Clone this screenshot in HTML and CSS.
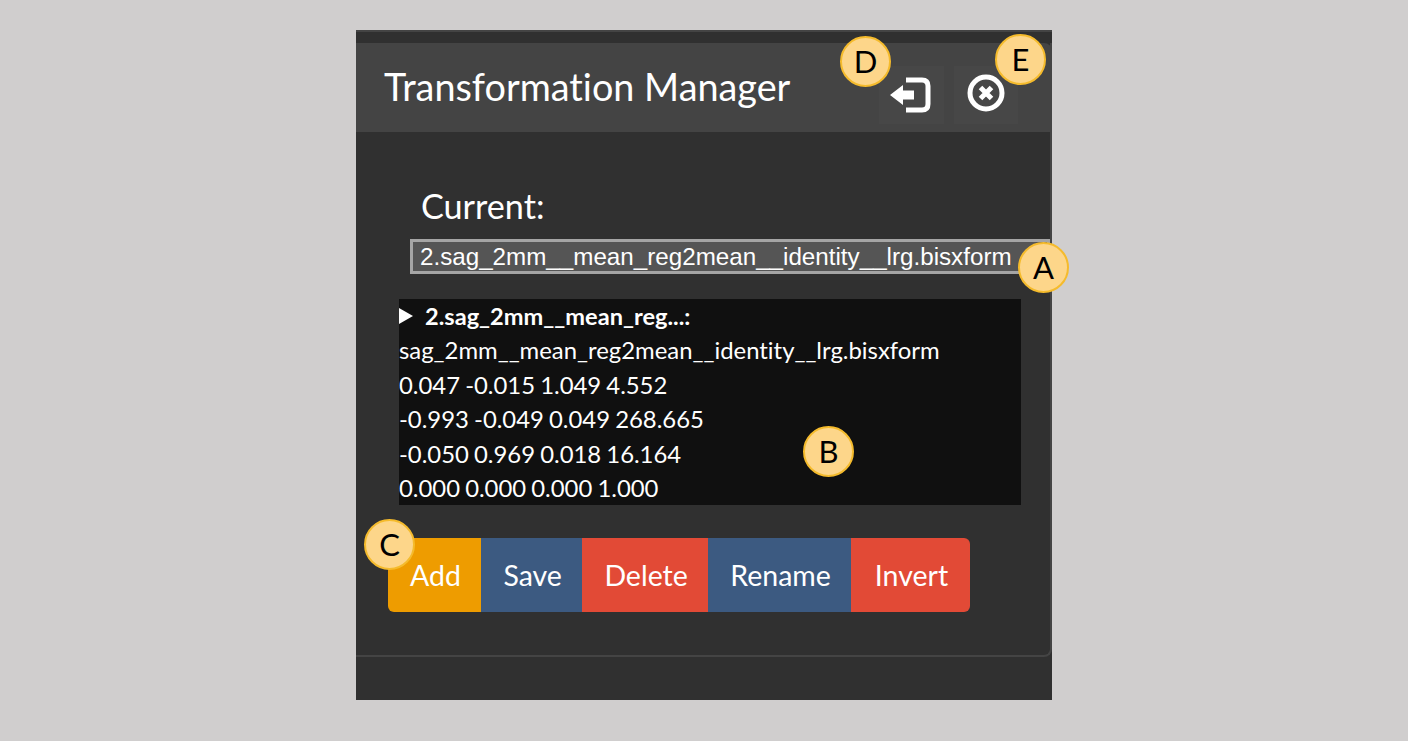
FILE: index.html
```html
<!DOCTYPE html>
<html>
<head>
<meta charset="utf-8">
<title>Transformation Manager</title>
<link rel="stylesheet" href="styles.css">
</head>
<body>
<div class="panel">
	<div class="dialog">
		<div class="header">
			<h1 class="title">Transformation Manager</h1>
			<div class="iconbtn exitbtn">
				<svg width="42" height="36" viewBox="0 0 42 36">
					<path d="M0 18 L13 8 V13.5 H24 V22.5 H13 V28 Z" fill="#fff"/>
					<path d="M16 3 H32 Q38 3 38 9 V27 Q38 33 32 33 H16" fill="none" stroke="#fff" stroke-width="5"/>
				</svg>
			</div>
			<div class="iconbtn closebtn">
				<svg width="40" height="40" viewBox="0 0 40 40">
					<circle cx="20" cy="20" r="16" fill="none" stroke="#fff" stroke-width="5"/>
					<path d="M14.5 14.5 L25.5 25.5 M25.5 14.5 L14.5 25.5" fill="none" stroke="#fff" stroke-width="5"/>
				</svg>
			</div>
		</div>
		<div class="content">
			<div class="label">Current:</div>
			<div class="current">2.sag_2mm__mean_reg2mean__identity__lrg.bisxform</div>
			<div class="info">
				<div class="infohead"><span class="arrow"></span><b>2.sag_2mm__mean_reg...:</b></div>
				<div>sag_2mm__mean_reg2mean__identity__lrg.bisxform</div>
				<div>0.047 -0.015 1.049 4.552</div>
				<div>-0.993 -0.049 0.049 268.665</div>
				<div>-0.050 0.969 0.018 16.164</div>
				<div>0.000 0.000 0.000 1.000</div>
			</div>
			<div class="buttons">
				<a class="btn orange">Add</a>
				<a class="btn blue">Save</a>
				<a class="btn red">Delete</a>
				<a class="btn blue">Rename</a>
				<a class="btn red">Invert</a>
			</div>
		</div>
	</div>

	<!-- callout letters -->
	<div class="badge badge-a">A</div>
	<div class="badge badge-b">B</div>
	<div class="badge badge-c">C</div>
	<div class="badge badge-d">D</div>
	<div class="badge badge-e">E</div>
</div>
</body>
</html>
```

FILE: styles.css
```css
body {
  margin: 0;
  height: 741px;
  overflow: hidden;
  background-color: #d0cece;
  font-family: Lato, "Open Sans", sans-serif;
  font-variant-ligatures: none;
  color: #fff;
}

.panel {
  position: relative;
  width: 696px;
  height: 670px;
  margin: 30px 0 0 356px;
  padding-top: 11px;
  box-sizing: border-box;
  background-color: #303030;
  border-top: 2px solid #444;
}

.dialog {
  height: 614px;
  box-sizing: border-box;
  border-bottom: 2px solid #444;
  border-right: 2px solid #444;
  border-radius: 0 0 8px 0;
}

/* Title bar */
.header {
  display: flex;
  align-items: flex-end;
  height: 89px;
  padding: 0 34px 8px 28px;
  box-sizing: border-box;
  background-color: #444;
  border-radius: 0 8px 0 0;
  margin-right: -2px;
}

.title {
  flex: 1;
  margin: 0 0 16px 0;
  font-size: 37.8px;
  line-height: 42px;
  font-weight: 400;
}

.iconbtn {
  display: flex;
  align-items: center;
  justify-content: center;
  height: 58px;
  box-sizing: border-box;
  background-color: #474747;
}

.exitbtn {
  width: 65px;
  padding: 0 2px 1px 0;
}

.closebtn {
  width: 64px;
  margin-left: 10px;
  padding-bottom: 5px;
}

.content {
  padding: 52px 0 0 32px;
}

.label {
  margin-left: 33px;
  font-size: 34.2px;
  line-height: 44px;
}

.current {
  width: 640px;
  height: 35px;
  margin: 11px 0 0 22px;
  padding-left: 7px;
  box-sizing: border-box;
  border: 3px solid #a5a5a5;
  background-color: #555;
  font-family: "Liberation Sans", Arial, sans-serif;
  font-size: 24.2px;
  line-height: 29px;
  white-space: nowrap;
  overflow: hidden;
}

.info {
  width: 622px;
  height: 206px;
  margin: 25px 0 0 11px;
  background-color: #101010;
  font-size: 23.88px;
  line-height: 34.4px;
  word-spacing: -1px;
  white-space: nowrap;
}

.infohead {
  display: flex;
  align-items: center;
  font-size: 23.6px;
}

.arrow {
  width: 0;
  height: 0;
  margin-right: 12px;
  border-left: 14px solid #fff;
  border-top: 8px solid transparent;
  border-bottom: 8px solid transparent;
}

.buttons {
  display: flex;
  margin-top: 33px;
}

.btn {
  height: 74px;
  padding: 0 20.5px 0 22px;
  font-size: 28.5px;
  line-height: 74px;
}

.btn:first-child {
  border-radius: 6px 0 0 6px;
}

.btn:last-child {
  padding: 0 22px 0 23.5px;
  border-radius: 0 6px 6px 0;
}

.orange {
  background-color: #ee9c00;
}

.blue {
  background-color: #3c5a81;
}

.red {
  background-color: #e24a36;
}

/* Callouts */
.badge {
  position: absolute;
  width: 51px;
  height: 51px;
  box-sizing: border-box;
  border: 2px solid #f5bb2c;
  border-radius: 50%;
  background-color: #fdd68a;
  color: #000;
  font-size: 31px;
  line-height: 47px;
  text-align: center;
}

.badge-a {
  left: 662px;
  top: 210px;
}

.badge-b {
  left: 447px;
  top: 394px;
}

.badge-c {
  left: 8px;
  top: 487px;
}

.badge-d {
  left: 484px;
  top: 4px;
}

.badge-e {
  left: 639px;
  top: 2px;
}
```
